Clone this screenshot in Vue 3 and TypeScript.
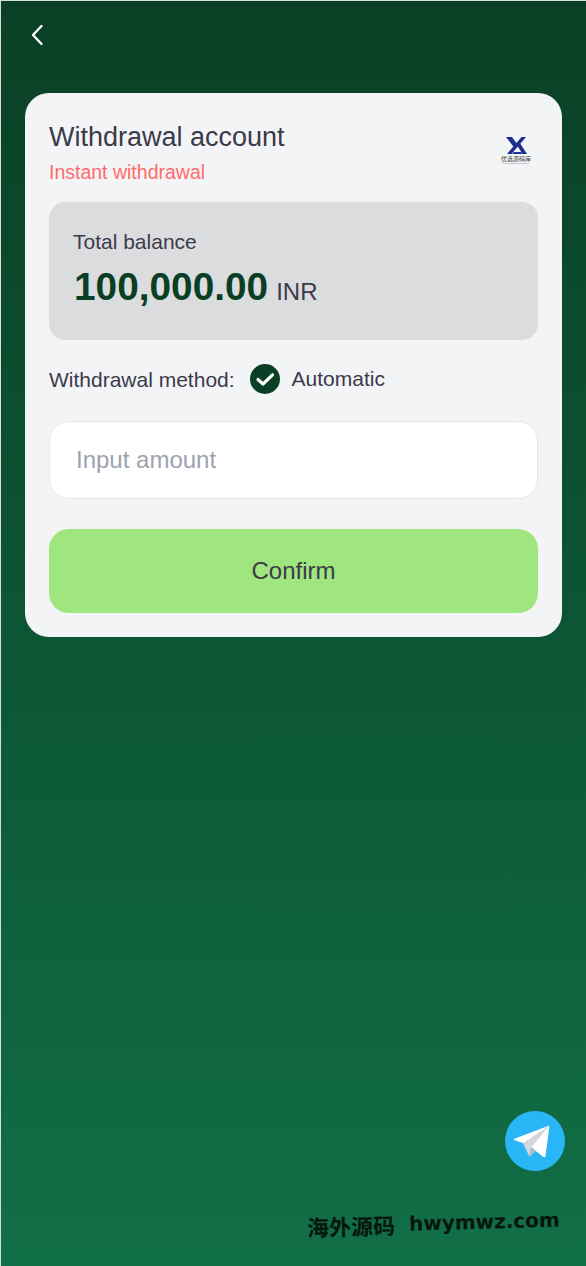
<template>
  <div class="page">
    <header class="top-bar">
      <button class="back-btn" type="button" aria-label="Back">
        <svg width="14" height="22" viewBox="0 0 14 22" fill="none">
          <path d="M11.5 2 L3 11 L11.5 20" stroke="#fff" stroke-width="2.4" stroke-linecap="round" stroke-linejoin="round" />
        </svg>
      </button>
    </header>

    <main class="card">
      <div class="card-head">
        <div>
          <h1 class="title">Withdrawal account</h1>
          <p class="subtitle">Instant withdrawal</p>
        </div>
        <div class="logo">
          <svg width="21" height="17" viewBox="0 0 21 17">
            <path d="M0 0 H6 L11.5 7.5 L8.5 11 Z" fill="#1c2f8f" />
            <path d="M20 0 H15.5 L1 17 H5.5 Z" fill="#1c2f8f" />
            <path d="M13.5 5.5 L21 17 H16.5 L11.5 9 Z" fill="#1c2f8f" />
            <path d="M8 15 H15 L16.5 17 H6 Z" fill="#1c2f8f" />
          </svg>
          <span class="logo-name">优选源码库</span>
          <span class="logo-line"></span>
        </div>
      </div>

      <section class="balance">
        <div class="balance-label">Total balance</div>
        <div class="balance-row">
          <span class="balance-value">{{ balance }}</span>
          <span class="balance-unit">{{ currency }}</span>
        </div>
      </section>

      <div class="method">
        <span class="method-label">Withdrawal method:</span>
        <span class="check">
          <svg width="30" height="30" viewBox="0 0 30 30">
            <circle cx="15" cy="15" r="15" fill="#0a3f25" />
            <path d="M8 15.5 L13 20 L22.5 10.8" fill="none" stroke="#fff" stroke-width="3.2" stroke-linecap="round" stroke-linejoin="round" />
          </svg>
        </span>
        <span class="method-name">Automatic</span>
      </div>

      <input v-model="amount" class="amount" type="text" placeholder="Input amount" />

      <button class="confirm" type="button">Confirm</button>
    </main>

    <a class="telegram" aria-label="Telegram">
      <svg width="60" height="60" viewBox="0 0 60 60">
        <circle cx="30" cy="30" r="30" fill="#29b6f6" />
        <path d="M9 29 Q8.5 28 10 27.5 L43 15 Q44.5 14.5 44.3 16 L40.5 45 Q40 47 38 45.8 L27 37 L18 32 Z" fill="#fff" />
        <path d="M18 32 L44 15 L26 37 L24.5 46 Z" fill="#d3d7db" />
        <path d="M24.5 46 L26 37 L30.5 40.5 Z" fill="#b4bbc2" />
      </svg>
    </a>

    <div class="watermark">
      <span class="mark-cn">海外源码</span>
      <span class="mark-en">hwymwz.com</span>
    </div>
  </div>
</template>

<script setup lang="ts">
import { ref } from 'vue'

const balance = '100,000.00'
const currency = 'INR'
const amount = ref('')
</script>

<style scoped>
.page {
  position: relative;
  box-sizing: border-box;
  height: 1266px;
  padding: 0 24px 0 25px;
  border-top: 1px solid #d8dcda;
  border-left: 1px solid #d8dcda;
  background: linear-gradient(180deg, #0a4025 0%, #0d5a38 60%, #116f47 100%);
  font-family: "Liberation Sans", Arial, sans-serif;
  color: #3b3a4a;
  overflow: hidden;
}

.top-bar {
  height: 92px;
  display: flex;
  align-items: flex-start;
}

.back-btn {
  margin: 23px 0 0 4px;
  padding: 0;
  border: 0;
  background: none;
  line-height: 0;
}

.card {
  box-sizing: border-box;
  width: 537px;
  margin-left: -1px;
  padding: 24px;
  border-radius: 24px;
  background: #f3f4f6;
}

.card-head {
  display: flex;
  justify-content: space-between;
  align-items: center;
}

.title {
  margin: 0;
  font-size: 27px;
  font-weight: 400;
  line-height: 40px;
}

.subtitle {
  margin: 1px 0 0;
  font-size: 19.5px;
  line-height: 28px;
  color: #ff6b6b;
}

.logo {
  width: 44px;
  display: flex;
  flex-direction: column;
  align-items: center;
  margin-top: -2px;
}

.logo-name {
  font-family: "Noto Sans CJK SC", sans-serif;
  font-size: 6px;
  line-height: 8px;
  white-space: nowrap;
  color: #444;
  margin-top: 1px;
}

.logo-line {
  width: 26px;
  height: 1px;
  background: #c9cad0;
}

.balance {
  box-sizing: border-box;
  height: 138px;
  margin-top: 16px;
  padding: 28px 24px;
  border-radius: 16px;
  background: #dbdcde;
}

.balance-label {
  font-size: 21px;
  line-height: 24px;
}

.balance-row {
  margin-top: 11px;
  line-height: 44px;
}

.balance-value {
  margin-left: 1px;
  font-size: 38.8px;
  font-weight: 700;
  color: #0a3f25;
}

.balance-unit {
  margin-left: 8px;
  font-size: 24px;
}

.method {
  display: flex;
  align-items: center;
  height: 30px;
  margin-top: 24px;
  font-size: 21px;
}

.method-label {
  margin-top: 1px;
}

.check {
  margin: 0 12px 0 15px;
  line-height: 0;
}

.method-name {
  margin-top: -1px;
}

.amount {
  display: block;
  box-sizing: border-box;
  width: 100%;
  height: 78px;
  margin-top: 27px;
  padding: 0 26px;
  border: 1px solid #e5e7eb;
  border-radius: 20px;
  outline: none;
  background: #fff;
  font: 24px "Liberation Sans", Arial, sans-serif;
  color: #3b3a4a;
}

.amount::placeholder {
  color: #9ca3af;
  opacity: 1;
}

.confirm {
  display: block;
  width: 100%;
  height: 84px;
  margin-top: 30px;
  border: 0;
  border-radius: 20px;
  background: #9fe67f;
  font: 24px "Liberation Sans", Arial, sans-serif;
  color: #3b3a4a;
}

.telegram {
  position: absolute;
  left: 504px;
  top: 1110px;
  line-height: 0;
}

.watermark {
  position: absolute;
  left: 306px;
  top: 1208px;
  display: flex;
  align-items: center;
  gap: 14px;
  font-weight: 700;
  line-height: 28px;
  white-space: nowrap;
  color: #06150e;
  transform: rotate(-1.5deg);
}

.mark-cn {
  font-family: "Noto Sans CJK SC", sans-serif;
  font-size: 22px;
}

.mark-en {
  font-family: "DejaVu Sans", sans-serif;
  font-size: 20px;
}
</style>

<style>
html,
body {
  margin: 0;
  background: #0a4025;
}
</style>
